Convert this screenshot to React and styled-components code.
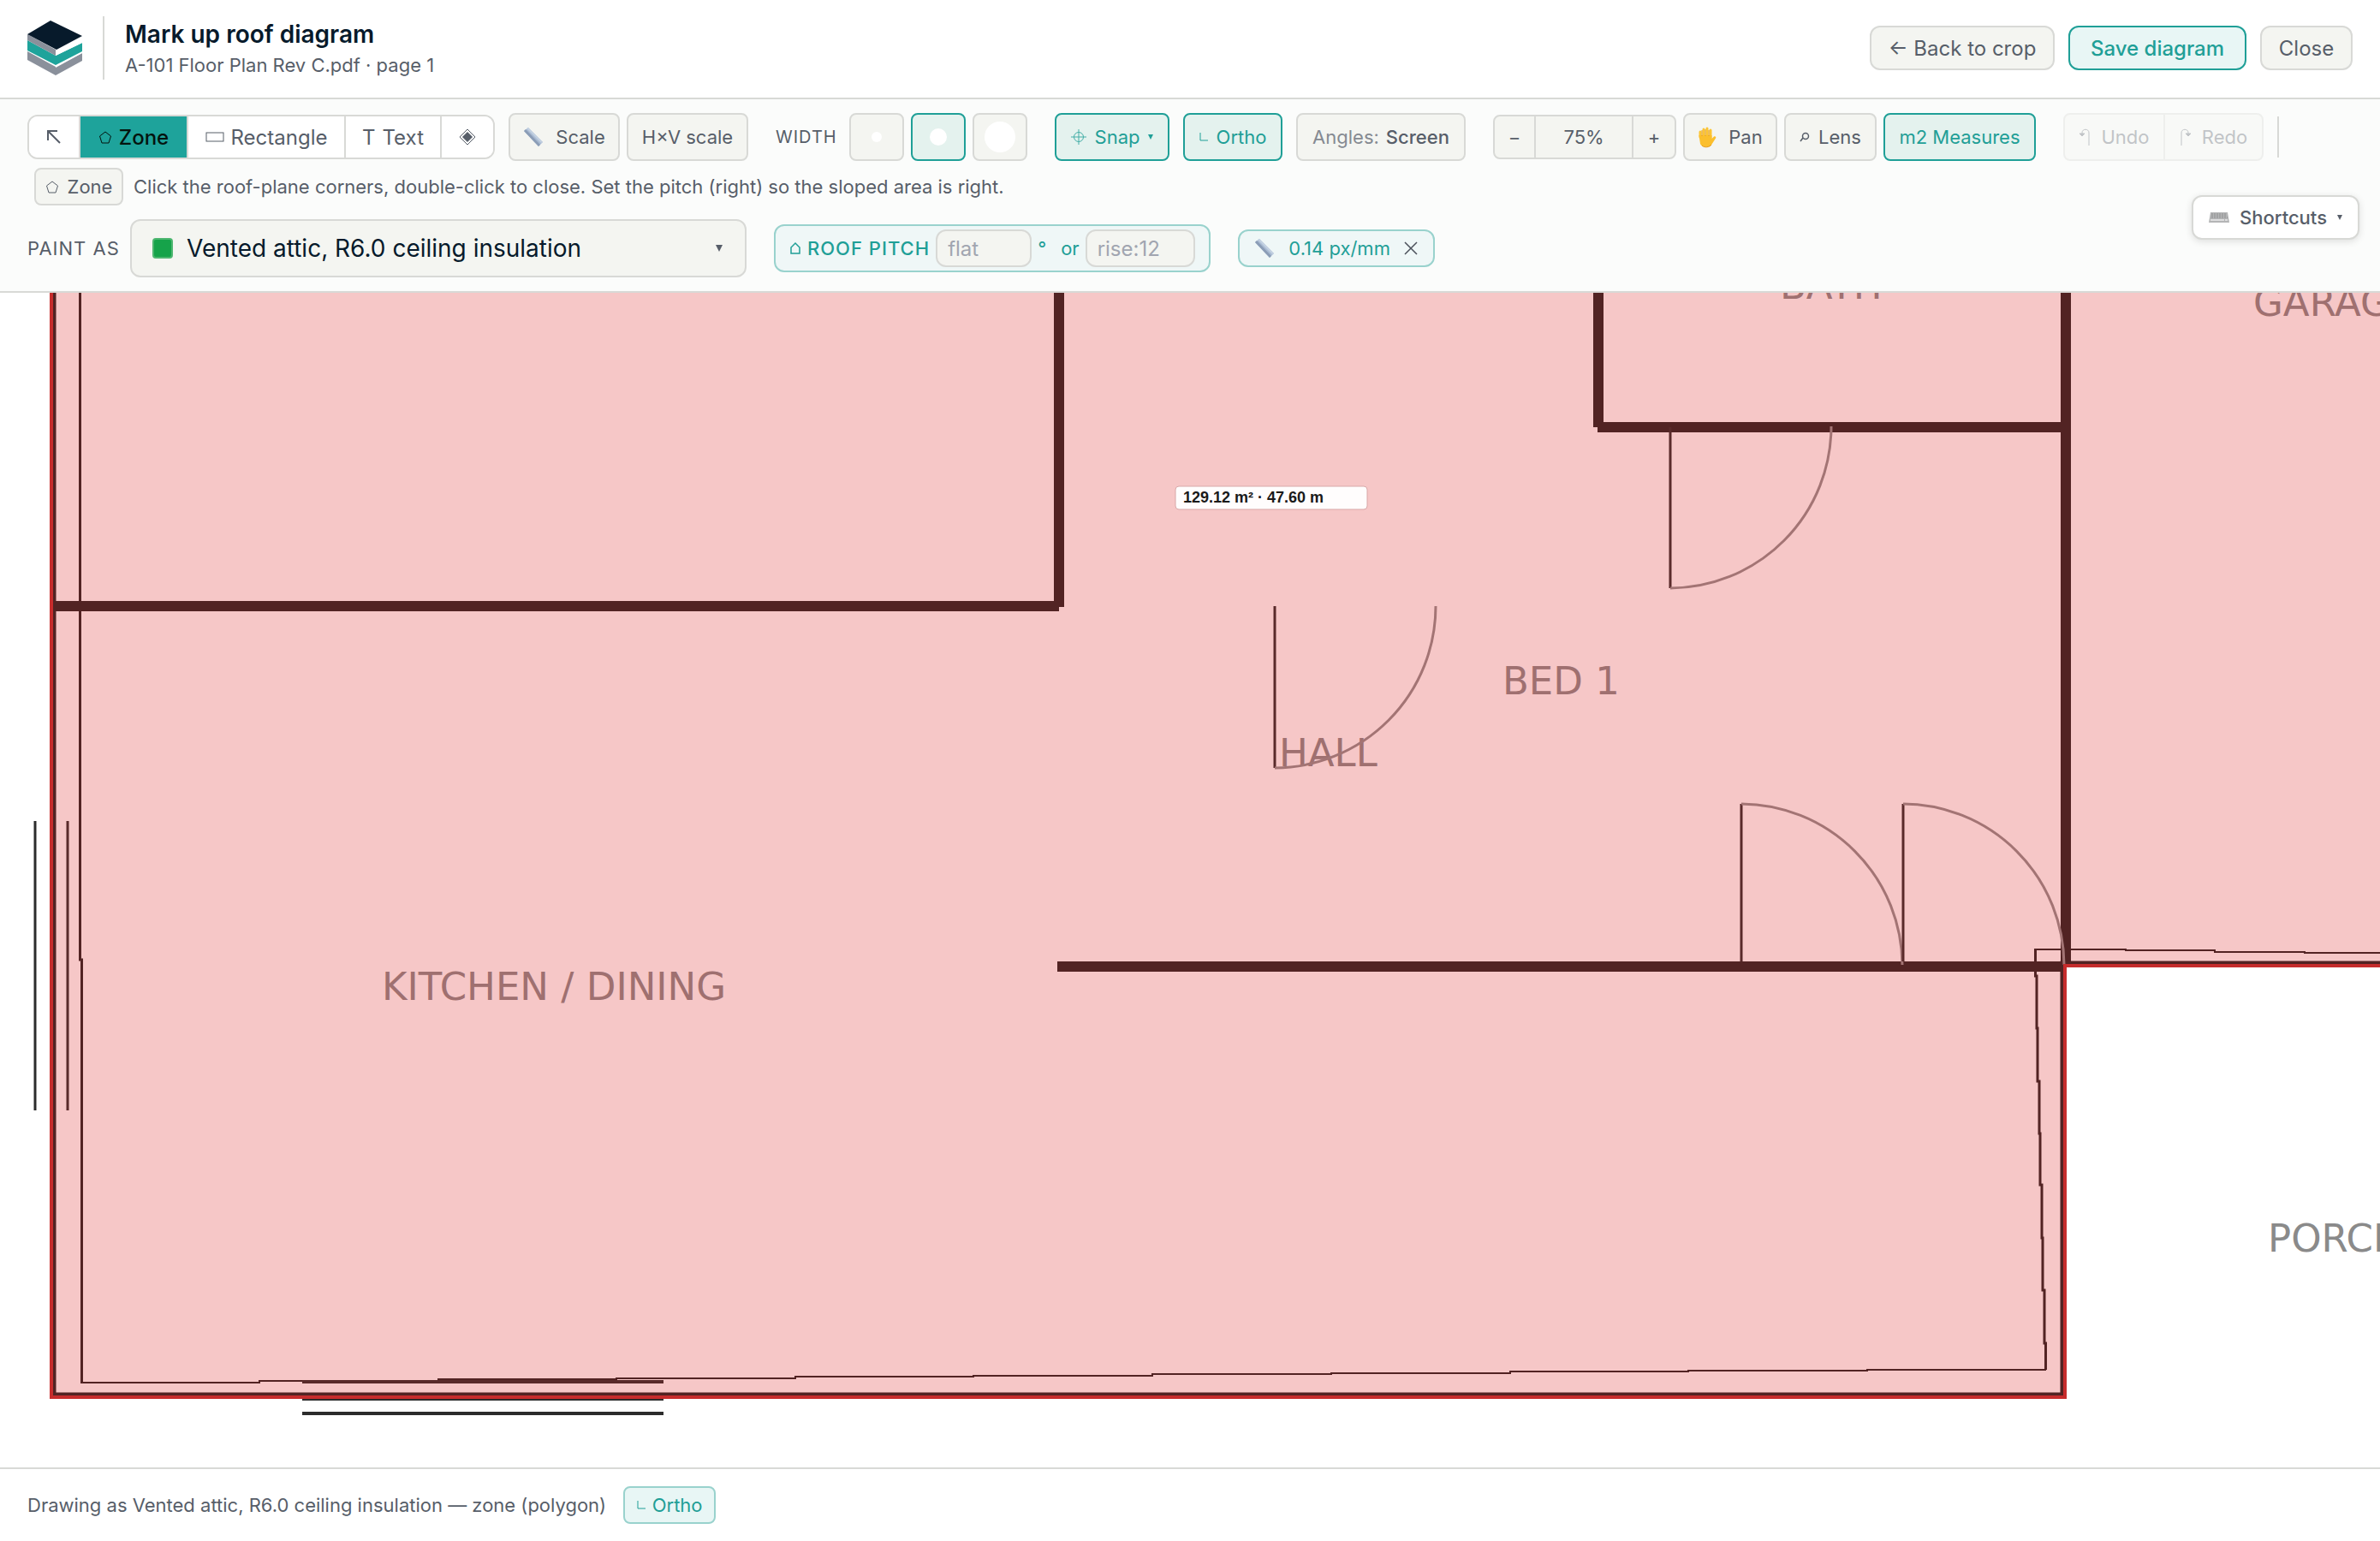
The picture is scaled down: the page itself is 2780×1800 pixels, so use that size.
import React, { useState } from "react";
import styled, { createGlobalStyle, css } from "styled-components";

const GlobalStyle = createGlobalStyle`
  * {
    box-sizing: border-box;
  }

  body {
    margin: 0;
    background-color: #ffffff;
    color: #575e69;
    font-family: Inter, "Liberation Sans", sans-serif;
    font-size: 22px;
  }

  button, input, select {
    font: inherit;
    color: inherit;
    margin: 0;
  }
`;

/* icons */

const Logo = () => (
  <svg width="64" height="64" viewBox="0 0 64 64" aria-label="Logo">
    <path d="M0 36V46L33 64L64 47V38L33 54Z" fill="#8a909b" />
    <path d="M33 52L64 35V38L33 55Z" fill="#ffffff" />
    <path d="M0 23V35L33 52L64 36V26L33 41Z" fill="#1ea39b" />
    <path d="M0 16V23L33 41V34Z" fill="#8a909b" />
    <path d="M33 34L64 19V26L33 41Z" fill="#ffffff" />
    <path d="M27 0L64 18L34 34L0 16Z" fill="#071a2b" />
  </svg>
);

const ArrowIcon = () => (
  <svg width="18" height="18" viewBox="0 0 18 18" fill="none" stroke="currentColor" strokeWidth="2">
    <path d="M2 13V2H13M2 2L16 16" />
  </svg>
);

const PentagonIcon = () => (
  <svg width="16" height="16" viewBox="0 0 16 16" fill="none" stroke="currentColor" strokeWidth="1">
    <path d="M8 2L14.500 7L12 15H4L1.500 7Z" />
  </svg>
);

const RectIcon = () => (
  <svg width="22" height="12" viewBox="0 0 22 12" fill="none" stroke="currentColor" strokeWidth="1">
    <rect x="1" y="1" width="20" height="10" />
  </svg>
);

const DiamondIcon = () => (
  <svg width="20" height="20" viewBox="0 0 20 20">
    <path d="M10 1L19 10L10 19L1 10Z" fill="none" stroke="currentColor" />
    <path d="M10 4L16 10L10 16L4 10Z" fill="currentColor" />
  </svg>
);

const RulerIcon = () => (
  <svg width="24" height="24" viewBox="0 0 24 24">
    <path d="M1 5L6 1L23 18L18 23Z" fill="#a9bbd3" />
    <path d="M1 5L3 3L20 21L18 23Z" fill="#8b9db6" />
    <path d="M4 2L6 1L23 18L21 19Z" fill="#c3d1e2" />
  </svg>
);

const SnapIcon = () => (
  <svg width="18" height="18" viewBox="0 0 18 18" fill="none" stroke="currentColor" strokeWidth="1" opacity="0.8">
    <circle cx="9" cy="9" r="5.500" />
    <path d="M9 0V18M0 9H18" />
  </svg>
);

const OrthoIcon = () => (
  <svg width="10" height="10" viewBox="0 0 10 10" fill="none" stroke="currentColor" strokeWidth="1">
    <path d="M1 0V9H10" />
  </svg>
);

const HouseIcon = () => (
  <svg width="14" height="16" viewBox="0 0 14 16" fill="none" stroke="currentColor" strokeWidth="1.5">
    <path d="M2 14V7L7 2L12 7V14Z" />
  </svg>
);

const HandIcon = () => (
  <svg width="22" height="26" viewBox="0 0 22 26">
    <path
      d="M3 7V13M7 4V13M11 3V13M15 5V14"
      stroke="#fcc534"
      strokeWidth="3"
      strokeLinecap="round"
    />
    <path
      d="M1.500 11H16.500V15L19 12.500C20.500 11.500 22 13 21 14.500L16.500 21.500C14.500 26 5 26 3 21Z"
      fill="#fbbf2d"
    />
    <path d="M5 5V12M9 4V12M13 5V12" stroke="#e59b1c" strokeWidth="1" />
    <path d="M5 23C8 26 14 25 16 22" stroke="#e59b1c" strokeWidth="1" fill="none" />
  </svg>
);

const LensIcon = () => (
  <svg width="12" height="12" viewBox="0 0 12 12" fill="none" stroke="currentColor" strokeWidth="1.5">
    <circle cx="7" cy="5" r="3.500" />
    <path d="M4 7L1 11" />
  </svg>
);

const UndoIcon = ({ flip }) => (
  <svg width="14" height="20" viewBox="0 0 14 20" fill="none" stroke="currentColor" strokeWidth="1">
    <g transform={flip ? "matrix(-1 0 0 1 14 0)" : undefined}>
      <path d="M12 20V5C12 0 4 0 4 5V8" />
      <path d="M1 6H7L4 9Z" fill="currentColor" />
    </g>
  </svg>
);

const KeyboardIcon = () => (
  <svg width="24" height="12" viewBox="0 0 24 12">
    <path d="M2 0H22L24 12H0Z" fill="#b4b5b6" />
    <path d="M3 2H21M3 4H21M3 6H22" stroke="#8e8f91" strokeWidth="1" strokeDasharray="2 1" />
    <path d="M2 9H18M19 9H22" stroke="#dededf" strokeWidth="2" />
  </svg>
);

const CloseIcon = () => (
  <svg width="16" height="16" viewBox="0 0 16 16" fill="none" stroke="currentColor" strokeWidth="1.5">
    <path d="M1 1L15 15M15 1L1 15" />
  </svg>
);

const Caret = ({ size = 6 }) => (
  <svg width={size} height={size} viewBox="0 0 8 8" aria-hidden="true">
    <path d="M0 0H8L4 8Z" fill="currentColor" />
  </svg>
);

/* floor plan */

const plan = {
  walls: [
    "M1237 342V709",
    "M63 708H1237",
    "M1867 342V499",
    "M1866 499H2409",
    "M2413 342V1126",
    "M1235 1129H2409",
  ],
  doors: [
    { leaf: "M1951 499V687", swing: "M1951 687A189 189 0 0 0 2139 498" },
    { leaf: "M1489 708V897", swing: "M1489 897A189 189 0 0 0 1677 708" },
    { leaf: "M2034 939V1123", swing: "M2034 939A189 189 0 0 1 2222 1127" },
    { leaf: "M2223 939V1123", swing: "M2223 939A189 189 0 0 1 2411 1127" },
  ],
  sideWindows: ["M41 959V1297", "M79 959V1297"],
  bottomWindows: ["M353 1614H775", "M353 1634H775", "M353 1651H775"],
  rooms: [
    { name: "KITCHEN / DINING", x: 446, y: 1168 },
    { name: "HALL", x: 1494, y: 895 },
    { name: "BED 1", x: 1755, y: 811 },
    { name: "BATH", x: 2079, y: 349 },
    { name: "GARAGE", x: 2632, y: 369 },
    { name: "PORCH", x: 2649, y: 1462 },
  ],
};

const outerWall = "M63 342V1629H2409V1125H2800";
const zoneOutline = "M60 300V1632H2412V1128H3400V300Z";

const innerLeft = "M93.500 342V1121H95.500V1616";
const innerBottom =
  "M95 1615H303V1613H720V1610H929V1608H1137V1607H1346V1605H1555V1604H1764V1602H1972V1601H2181V1600H2390";
const innerRight =
  "M2389.500 1600V1569H2388V1507H2386V1446H2385V1384H2383V1324H2382V1263H2380V1201H2379V1140H2377.500V1108";
const innerTop = "M2377 1109H2483V1110H2587V1112H2692V1113H2800";

const FloorPlan = () => (
  <PlanSvg role="img" aria-label="Floor plan">
    <g transform="translate(0 -342)">
      {plan.rooms.map((room) => (
        <RoomLabel key={room.name} x={room.x} y={room.y}>
          {room.name}
        </RoomLabel>
      ))}
      <g fill="none">
        <path d={outerWall} stroke="#222222" strokeWidth="5" />
        <g stroke="#222222" strokeWidth="12">
          {plan.walls.map((d) => (
            <path key={d} d={d} />
          ))}
        </g>
        <g stroke="#222222">
          <path d={innerLeft} strokeWidth="3" />
          <path d={innerRight} strokeWidth="3" />
          <path d={innerBottom} strokeWidth="2" />
          <path d={innerTop} strokeWidth="2" />
          <path d="M511 1612H720" strokeWidth="4" />
        </g>
        <g stroke="#2c2c2c" strokeWidth="3">
          {plan.sideWindows.map((d) => (
            <path key={d} d={d} />
          ))}
        </g>
        <g stroke="#2c2c2c" strokeWidth="4">
          {plan.bottomWindows.map((d) => (
            <path key={d} d={d} />
          ))}
        </g>
        {plan.doors.map((door) => (
          <g key={door.leaf}>
            <path d={door.leaf} stroke="#2c2c2c" strokeWidth="3" />
            <path d={door.swing} stroke="#909090" strokeWidth="3" />
          </g>
        ))}
      </g>
      <path d={zoneOutline} fill="#dc2626" fillOpacity="0.26" />
      <path d={zoneOutline} fill="none" stroke="#c62c2c" strokeWidth="4" />
      <rect x="1373" y="568" width="224" height="27" rx="4" fill="#fffdfd" stroke="#d8a8a8" />
      <MeasureText x="1382" y="587">129.12 m² · 47.60 m</MeasureText>
    </g>
  </PlanSvg>
);

const widths = [
  { name: "Thin", size: 12 },
  { name: "Medium", size: 20 },
  { name: "Thick", size: 36 },
];

const App = () => {
  const [width, setWidth] = useState("Medium");
  const [tool, setTool] = useState("zone");
  const [degrees, setDegrees] = useState("");
  const [rise, setRise] = useState("");

  return (
    <Page>
      <GlobalStyle />
      <Header>
        <Brand>
          <Logo />
        </Brand>
        <TitleBox>
          <Title>Mark up roof diagram</Title>
          <Subtitle>A-101 Floor Plan Rev C.pdf · page 1</Subtitle>
        </TitleBox>
        <HeaderButton $width={216}>← Back to crop</HeaderButton>
        <HeaderButton $width={208} $primary>
          Save diagram
        </HeaderButton>
        <HeaderButton $width={108}>Close</HeaderButton>
      </Header>

      <Toolbar>
        <ToolRow>
          <Segmented>
            <Segment $width={60} aria-label="Select" onClick={() => setTool("select")} $active={tool === "select"}>
              <ArrowIcon />
            </Segment>
            <Segment $width={126} onClick={() => setTool("zone")} $active={tool === "zone"}>
              <PentagonIcon />
              Zone
            </Segment>
            <Segment $width={184} onClick={() => setTool("rect")} $active={tool === "rect"}>
              <RectIcon />
              Rectangle
            </Segment>
            <Segment $width={112} onClick={() => setTool("text")} $active={tool === "text"}>
              <span>T</span>
              Text
            </Segment>
            <Segment $width={60} aria-label="Marker" onClick={() => setTool("marker")} $active={tool === "marker"}>
              <DiamondIcon />
            </Segment>
          </Segmented>

          <Group $gap={8}>
            <ToolButton $width={130} $gap={14}>
              <RulerIcon />
              Scale
            </ToolButton>
            <ToolButton $width={142}>H×V scale</ToolButton>
          </Group>

          <Group $gap={8} $before={16}>
            <ToolLabel $width={78}>WIDTH</ToolLabel>
            {widths.map((item) => (
              <ToolButton
                key={item.name}
                $width={64}
                $active={width === item.name}
                aria-label={item.name}
                onClick={() => setWidth(item.name)}
              >
                <Dot $size={item.size} />
              </ToolButton>
            ))}
          </Group>

          <Group $gap={16} $before={16}>
            <ToolButton $width={134} $gap={10} $active>
              <SnapIcon />
              Snap
              <Caret />
            </ToolButton>
            <ToolButton $width={116} $gap={10} $active>
              <OrthoIcon />
              Ortho
            </ToolButton>
            <ToolButton $width={198}>
              <Muted>Angles:</Muted>
              <Strong>Screen</Strong>
            </ToolButton>
          </Group>

          <Group $gap={8} $before={16}>
            <Zoom>
              <ZoomButton $width={48} aria-label="Zoom out">−</ZoomButton>
              <ZoomButton $width={114}>75%</ZoomButton>
              <ZoomButton $width={48} aria-label="Zoom in">+</ZoomButton>
            </Zoom>
            <ToolButton $width={110} $gap={14}>
              <HandIcon />
              Pan
            </ToolButton>
            <ToolButton $width={108} $gap={10}>
              <LensIcon />
              Lens
            </ToolButton>
            <ToolButton $width={178} $active>
              m2 Measures
            </ToolButton>
          </Group>

          <Group $gap={16} $before={16}>
            <History>
              <HistoryButton disabled>
                <UndoIcon />
                Undo
              </HistoryButton>
              <HistoryButton disabled>
                <UndoIcon flip />
                Redo
              </HistoryButton>
            </History>
            <Separator />
          </Group>
        </ToolRow>

        <HintRow>
          <ZoneChip>
            <PentagonIcon />
            Zone
          </ZoneChip>
          <span>
            Click the roof-plane corners, double-click to close. Set the pitch (right) so the sloped
            area is right.
          </span>
        </HintRow>

        <PaintRow>
          <PaintLabel htmlFor="paint">PAINT AS</PaintLabel>
          <PaintBox>
            <Swatch />
            <PaintSelect id="paint">
              <option>Vented attic, R6.0 ceiling insulation</option>
            </PaintSelect>
            <Caret size={8} />
          </PaintBox>
          <PitchBox>
            <HouseIcon />
            <PitchLabel htmlFor="degrees">ROOF PITCH</PitchLabel>
            <PitchInput
              id="degrees"
              $width={112}
              placeholder="flat"
              value={degrees}
              onChange={(e) => setDegrees(e.target.value)}
            />
            <PitchUnit>°</PitchUnit>
            <label htmlFor="rise">or</label>
            <PitchInput
              id="rise"
              $width={128}
              placeholder="rise:12"
              value={rise}
              onChange={(e) => setRise(e.target.value)}
            />
          </PitchBox>
          <ScaleChip>
            <RulerIcon />
            0.14 px/mm
            <ClearButton aria-label="Clear scale">
              <CloseIcon />
            </ClearButton>
          </ScaleChip>
        </PaintRow>

        <Shortcuts>
          <KeyboardIcon />
          Shortcuts
          <Caret />
        </Shortcuts>
      </Toolbar>

      <Canvas>
        <FloorPlan />
      </Canvas>

      <Footer>
        <span>Drawing as Vented attic, R6.0 ceiling insulation — zone (polygon)</span>
        <OrthoChip>
          <OrthoIcon />
          Ortho
        </OrthoChip>
      </Footer>
    </Page>
  );
};

export default App;

const Page = styled.div`
  display: flex;
  flex-direction: column;
  height: 100vh;
  overflow: hidden;
`;

const Header = styled.header`
  display: flex;
  align-items: center;
  gap: 16px;
  padding: 19px 32px 21px;
  border-bottom: 2px solid #d8d9d6;
`;

const Brand = styled.div`
  display: flex;
  align-items: center;
  height: 74px;
  padding-right: 24px;
  border-right: 2px solid #d8d9d6;
`;

const TitleBox = styled.div`
  flex: 1;
  padding-left: 8px;
`;

const Title = styled.h1`
  margin: 0;
  color: #071a2b;
  font-size: 28px;
  font-weight: 600;
  line-height: 40px;
`;

const Subtitle = styled.p`
  margin: 0;
  font-size: 22px;
  line-height: 32px;
`;

const buttonBase = css`
  display: flex;
  align-items: center;
  justify-content: center;
  padding: 0;
  border: 2px solid #d8d9d6;
  background-color: #f4f5f1;
  white-space: nowrap;
  cursor: pointer;
`;

const HeaderButton = styled.button`
  ${buttonBase}
  width: ${({ $width }) => $width}px;
  height: 52px;
  border-radius: 12px;
  font-size: 24px;

  ${({ $primary }) =>
    $primary &&
    css`
      border-color: #1f9f97;
      background-color: #e8f6f5;
      color: #1f9f97;
      font-weight: 500;
    `}
`;

const Toolbar = styled.section`
  position: relative;
  display: flex;
  flex-direction: column;
  padding: 16px 32px;
  border-bottom: 2px solid #d8d9d6;
  background-color: #fbfcfb;
`;

const ToolRow = styled.div`
  display: flex;
  align-items: center;
  gap: 16px;
  height: 56px;
`;

const Group = styled.div`
  display: flex;
  align-items: center;
  gap: ${({ $gap }) => $gap}px;
  margin-left: ${({ $before = 0 }) => $before}px;
`;

const Segmented = styled.div`
  display: flex;
  height: 52px;
  border: 2px solid #d8d9d6;
  border-radius: 12px;
  background-color: #ffffff;
  overflow: hidden;
`;

const Segment = styled.button`
  display: flex;
  align-items: center;
  justify-content: center;
  gap: 8px;
  width: ${({ $width }) => $width}px;
  padding: 0;
  border: none;
  border-right: 2px solid #d8d9d6;
  background-color: ${({ $active }) => ($active ? "#1ea39b" : "#ffffff")};
  color: ${({ $active }) => ($active ? "#04140f" : "#575e69")};
  font-size: 24px;
  font-weight: ${({ $active }) => ($active ? 500 : 400)};
  cursor: pointer;

  &:last-child {
    border-right: none;
  }
`;

const ToolButton = styled.button`
  ${buttonBase}
  gap: ${({ $gap = 8 }) => $gap}px;
  width: ${({ $width }) => $width}px;
  height: 56px;
  border-radius: 8px;

  ${({ $active }) =>
    $active &&
    css`
      border-color: #1f9f97;
      background-color: #e4f2ee;
      color: #1f9f97;
    `}
`;

const ToolLabel = styled.span`
  width: ${({ $width }) => $width}px;
  font-size: 20px;
  letter-spacing: 1px;
`;

const Dot = styled.span`
  width: ${({ $size }) => $size}px;
  height: ${({ $size }) => $size}px;
  border-radius: 50%;
  background-color: #ffffff;
`;

const Muted = styled.span`
  color: #858a92;
`;

const Strong = styled.span`
  font-weight: 500;
`;

const Zoom = styled.div`
  display: flex;
  height: 52px;
  border: 2px solid #d8d9d6;
  border-radius: 8px;
  background-color: #f4f5f1;
  overflow: hidden;
`;

const ZoomButton = styled.button`
  width: ${({ $width }) => $width}px;
  padding: 0;
  border: none;
  border-right: 2px solid #d8d9d6;
  background-color: transparent;
  cursor: pointer;

  &:last-child {
    border-right: none;
  }
`;

const History = styled.div`
  display: flex;
  height: 56px;
  border: 2px solid #d8d9d6;
  border-radius: 8px;
  background-color: #f4f5f1;
  opacity: 0.35;
`;

const HistoryButton = styled.button`
  display: flex;
  align-items: center;
  justify-content: center;
  gap: 12px;
  width: 115px;
  padding: 0;
  border: none;
  background-color: transparent;

  & + & {
    border-left: 2px solid #d8d9d6;
  }
`;

const Separator = styled.div`
  width: 2px;
  height: 48px;
  background-color: #d8d9d6;
`;

const HintRow = styled.div`
  display: flex;
  align-items: center;
  gap: 12px;
  margin-top: 8px;
  padding-left: 8px;
`;

const ZoneChip = styled.span`
  display: flex;
  align-items: center;
  justify-content: center;
  gap: 10px;
  width: 104px;
  height: 44px;
  border: 2px solid #d8d9d6;
  border-radius: 8px;
  background-color: #f4f5f1;
`;

const PaintRow = styled.div`
  display: flex;
  align-items: center;
  margin-top: 16px;
`;

const PaintLabel = styled.label`
  width: 120px;
  font-size: 22px;
  letter-spacing: 1px;
  white-space: nowrap;
`;

const PaintBox = styled.div`
  display: flex;
  align-items: center;
  gap: 16px;
  width: 720px;
  height: 68px;
  padding: 0 26px 0 24px;
  border: 2px solid #d8d9d6;
  border-radius: 12px;
  background-color: #f4f5f1;
`;

const Swatch = styled.span`
  width: 24px;
  height: 24px;
  border: 2px solid #4db670;
  border-radius: 4px;
  background-color: #16a34a;
`;

const PaintSelect = styled.select`
  flex: 1;
  padding: 0;
  border: none;
  appearance: none;
  background-color: transparent;
  color: #071a2b;
  font-size: 28px;
`;

const PitchBox = styled.div`
  display: flex;
  align-items: center;
  gap: 7px;
  height: 56px;
  margin-left: 32px;
  padding: 0 16px;
  border: 2px solid #99d2cd;
  border-radius: 12px;
  background-color: #eff7f7;
  color: #1f9f97;
`;

const PitchLabel = styled.label`
  font-weight: 500;
  letter-spacing: 1px;
`;

const PitchInput = styled.input`
  width: ${({ $width }) => $width}px;
  height: 44px;
  padding: 0 12px;
  border: 2px solid #d8d9d6;
  border-radius: 12px;
  background-color: #f4f5f1;
  font-size: 24px;

  &::placeholder {
    color: #a1a5b0;
  }
`;

const PitchUnit = styled.span`
  width: 20px;
`;

const ScaleChip = styled.div`
  display: flex;
  align-items: center;
  justify-content: center;
  gap: 16px;
  width: 230px;
  height: 44px;
  margin-left: 32px;
  border: 2px solid #99d2cd;
  border-radius: 12px;
  background-color: #eff7f7;
  color: #1f9f97;
`;

const ClearButton = styled.button`
  display: flex;
  padding: 0;
  border: none;
  background-color: transparent;
  color: #4b515b;
  cursor: pointer;
`;

const Shortcuts = styled.button`
  position: absolute;
  top: 112px;
  right: 24px;
  display: flex;
  align-items: center;
  justify-content: center;
  gap: 12px;
  width: 196px;
  height: 52px;
  padding: 0;
  border: 2px solid #d8d9d6;
  border-radius: 12px;
  background-color: #ffffff;
  box-shadow: 0 2px 8px rgba(0, 0, 0, 0.12);
  font-weight: 500;
  cursor: pointer;
`;

const Canvas = styled.main`
  flex: 1;
  min-height: 0;
  background-color: #ffffff;
`;

const PlanSvg = styled.svg`
  display: block;
  width: 100%;
  height: 100%;
`;

const RoomLabel = styled.text`
  fill: #8a8a8a;
  font-family: "DejaVu Sans", sans-serif;
  font-size: 45px;
`;

const MeasureText = styled.text`
  fill: #1a1a1a;
  font-family: "Liberation Sans", sans-serif;
  font-size: 18px;
  font-weight: 700;
`;

const Footer = styled.footer`
  display: flex;
  align-items: center;
  gap: 20px;
  height: 86px;
  padding: 0 32px;
  border-top: 2px solid #d8d9d6;
  background-color: #ffffff;
`;

const OrthoChip = styled.span`
  display: flex;
  align-items: center;
  justify-content: center;
  gap: 8px;
  width: 108px;
  height: 44px;
  border: 2px solid #99d2cd;
  border-radius: 8px;
  background-color: #e8f6f5;
  color: #1f9f97;
`;
